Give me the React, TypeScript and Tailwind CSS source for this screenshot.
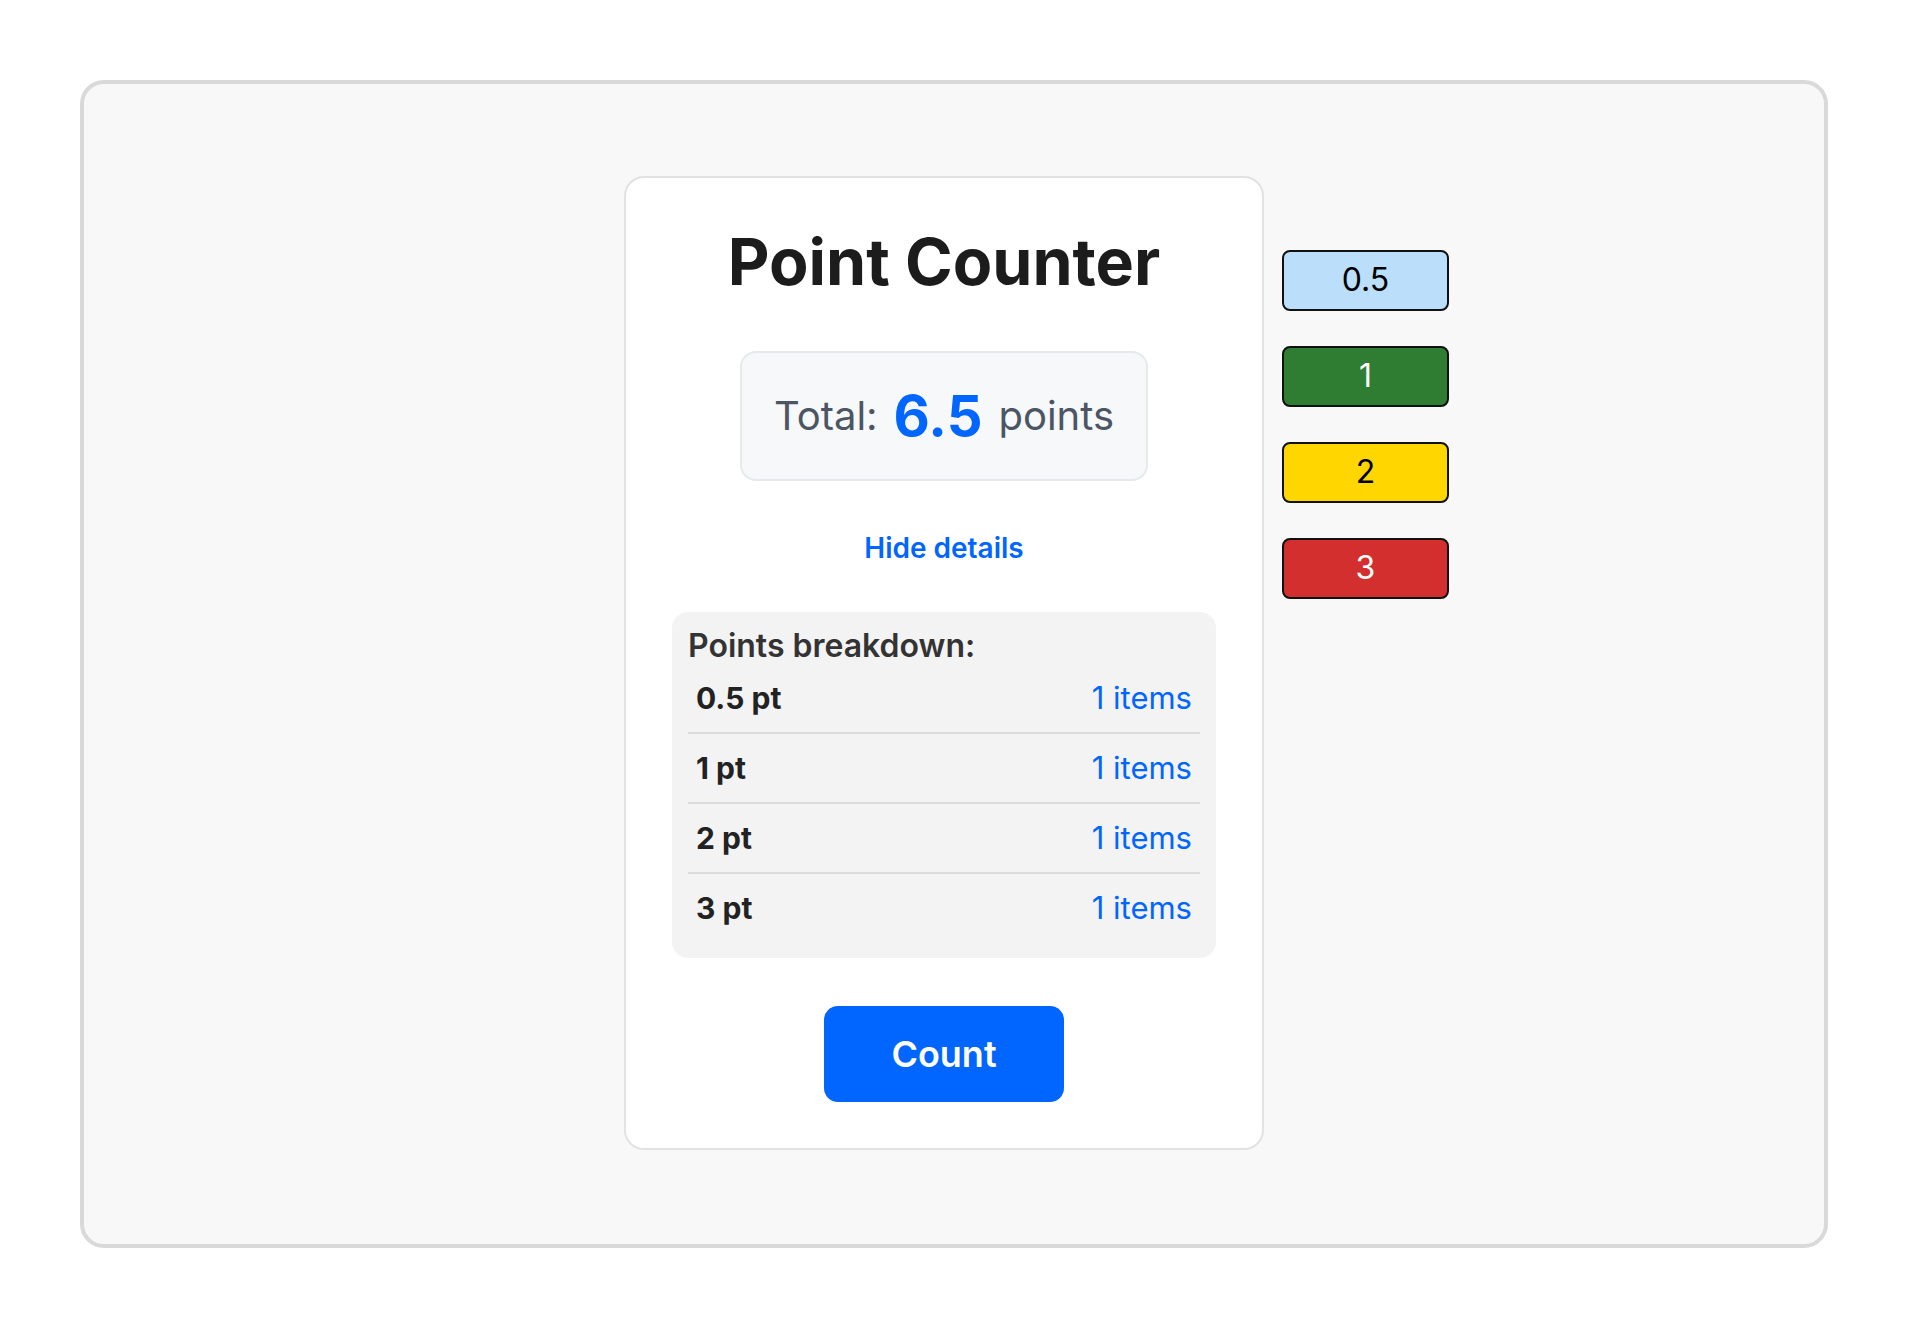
import { useState } from 'react';

const values = [
  { label: '0.5', value: 0.5, className: 'bg-[#bbdefb] text-black' },
  { label: '1', value: 1, className: 'bg-[#2e7d32] text-white' },
  { label: '2', value: 2, className: 'bg-[#ffd600] text-black' },
  { label: '3', value: 3, className: 'bg-[#d32f2f] text-white' },
];

export default function App() {
  const [showDetails, setShowDetails] = useState(true);
  const counts: Record<string, number> = { '0.5': 1, '1': 1, '2': 1, '3': 1 };
  const total = values.reduce((sum, v) => sum + v.value * counts[v.label], 0);

  return (
    <div className="min-h-screen bg-white p-[80px] font-['Inter','Noto_Sans',sans-serif]">
      <div className="min-h-[1168px] rounded-[24px] border-4 border-[#d9d9d9] bg-[#f8f8f8] flex items-center justify-center">
        <div className="flex items-start gap-[18px] ml-[165px] -mt-[2px]">
          {/* main card */}
          <div className="w-[640px] rounded-[20px] border-2 border-[#e2e2e2] bg-white p-[46px] flex flex-col items-center">
            <h1 className="text-[64.5px] leading-[1.2] font-bold text-[#1c1c1c] mb-[50px]">Point Counter</h1>

            <div className="inline-flex items-center gap-4 rounded-2xl border-2 border-[#e6e8eb] bg-[#f6f8fa] px-8 py-6">
              <span className="text-[40px] leading-[1.4] text-[#4b5563]">Total:</span>
              <span className="text-[56px] leading-[1.4] font-bold text-[#0066ff]">{total}</span>
              <span className="text-[40px] leading-[1.4] text-[#4b5563]">points</span>
            </div>

            <button
              onClick={() => setShowDetails(!showDetails)}
              className="mt-[46px] mb-[43px] text-[28px] leading-[42px] font-semibold text-[#0066ff]"
            >
              {showDetails ? 'Hide details' : 'Show details'}
            </button>

            {showDetails && (
              <div className="w-full rounded-2xl bg-[#f3f3f3] p-4">
                <div className="text-[32px] leading-[36px] font-semibold text-[#333333]">Points breakdown:</div>
                {values.map((v, i) => (
                  <div
                    key={v.label}
                    className={
                      i < values.length - 1
                        ? 'flex items-center justify-between px-2 py-3 border-b-2 border-[#dcdcdc]'
                        : 'flex items-center justify-between px-2 py-3'
                    }
                  >
                    <span className="text-[30px] leading-[44px] font-bold text-[#222222]">{v.label} pt</span>
                    <span className="text-[31px] leading-[44px] text-[#0066ff]">{counts[v.label]} items</span>
                  </div>
                ))}
              </div>
            )}

            <button className="mt-[48px] w-[240px] h-[96px] rounded-[14px] bg-[#0066ff] text-white text-[36px] font-semibold">
              Count
            </button>
          </div>

          {/* point buttons */}
          <div className="mt-[74px] flex flex-col gap-[35px]">
            {values.map((v) => (
              <button
                key={v.label}
                className={`w-[167px] h-[61px] rounded-lg border-2 border-[#111111] text-[32px] ${v.className}`}
              >
                {v.label}
              </button>
            ))}
          </div>
        </div>
      </div>
    </div>
  );
}
